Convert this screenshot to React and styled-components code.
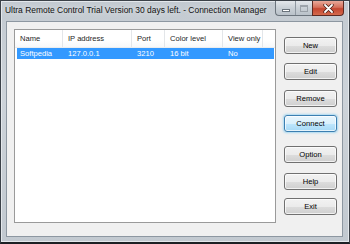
import styled, { createGlobalStyle } from "styled-components";

const GlobalStyle = createGlobalStyle`
  html, body {
    margin: 0;
    padding: 0;
    background: #ffffff;
  }
  * {
    box-sizing: border-box;
  }
`;

const columns = [
  { title: "Name", width: 48 },
  { title: "IP address", width: 69 },
  { title: "Port", width: 33 },
  { title: "Color level", width: 58 },
  { title: "View only", width: 40 },
];

const rows = [["Softpedia", "127.0.0.1", "3210", "16 bit", "No"]];

const buttons = [
  { label: "New", mt: 8 },
  { label: "Edit", mt: 9 },
  { label: "Remove", mt: 10 },
  { label: "Connect", mt: 8, focus: true },
  { label: "Option", mt: 14 },
  { label: "Help", mt: 10 },
  { label: "Exit", mt: 8 },
];

const App = () => {
  return (
    <>
      <GlobalStyle />
      <Window>
        <TitleBar>
          <Title>Ultra Remote Control Trial Version 30 days left. - Connection Manager</Title>
          <Caption>
            <CapGroup>
              <CapBtn>
                <MinIcon />
              </CapBtn>
              <CapBtn $max>
                <MaxIcon />
              </CapBtn>
            </CapGroup>
            <CloseBtn>
              <svg width="11" height="9" viewBox="0 0 11 9">
                <path d="M2 1 L9 8 M9 1 L2 8" stroke="#4a2018" strokeWidth="3.4" strokeLinecap="round" />
                <path d="M2 1 L9 8 M9 1 L2 8" stroke="#ffffff" strokeWidth="1.8" strokeLinecap="round" />
              </svg>
            </CloseBtn>
          </Caption>
        </TitleBar>
        <Client>
          <ListView>
            <Header>
              {columns.map((c) => (
                <HeadCell key={c.title} $w={c.width}>
                  {c.title}
                </HeadCell>
              ))}
              <HeadRest />
            </Header>
            {rows.map((r) => (
              <Row key={r[0]} $selected>
                {r.map((v, i) => (
                  <Cell key={i} $w={columns[i].width} $first={i === 0}>
                    {v}
                  </Cell>
                ))}
              </Row>
            ))}
          </ListView>
          <ButtonColumn>
            {buttons.map((b) => (
              <Button key={b.label} $mt={b.mt} $focus={b.focus}>
                {b.label}
              </Button>
            ))}
          </ButtonColumn>
        </Client>
      </Window>
    </>
  );
};
export default App;

const Window = styled.div`
  width: 350px;
  height: 244px;
  display: flex;
  flex-direction: column;
  border: 1px solid #3b4148;
  border-bottom: 2px solid #1c2024;
  background: linear-gradient(180deg, #c3cad1 0%, #cdd3d9 40%, #c2c9d0 100%);
  font-family: "Liberation Sans", Arial, sans-serif;
  box-shadow: inset 0 0 0 1px #e4e8ec;
`;

const TitleBar = styled.div`
  height: 20px;
  display: flex;
  justify-content: space-between;
  align-items: flex-start;
  padding-left: 4px;
  padding-right: 5px;
`;

const Title = styled.div`
  font-size: 8.45px;
  color: #111;
  line-height: 19px;
  white-space: nowrap;
  text-shadow: 0 0 6px rgba(255, 255, 255, 0.9);
`;

const Caption = styled.div`
  display: flex;
  align-items: flex-start;
`;

const CapGroup = styled.div`
  display: flex;
  height: 15px;
  border: 1px solid #6b747d;
  border-top: none;
  border-right: none;
  border-radius: 0 0 0 4px;
  overflow: hidden;
  background: linear-gradient(180deg, #e3e7eb 0%, #c9d0d6 50%, #b9c1c9 100%);
`;

const CapBtn = styled.div`
  width: ${(p) => (p.$max ? 17 : 19)}px;
  height: 100%;
  display: flex;
  align-items: center;
  justify-content: center;
  border-left: ${(p) => (p.$max ? "1px solid #8f98a1" : "none")};
`;

const MinIcon = styled.div`
  width: 8px;
  height: 3px;
  margin-top: 4px;
  background: #ffffff;
  border: 1px solid #6a737c;
`;

const MaxIcon = styled.div`
  width: 8px;
  height: 7px;
  border: 1px solid #8e969e;
  border-top-width: 2px;
  opacity: 0.8;
`;

const CloseBtn = styled.div`
  width: 32px;
  height: 15px;
  display: flex;
  align-items: center;
  justify-content: center;
  border: 1px solid #5d2a22;
  border-top: none;
  border-radius: 0 0 4px 0;
  background: linear-gradient(180deg, #e9a99a 0%, #d5705b 45%, #c44630 55%, #d46a4d 100%);
`;

const Client = styled.div`
  flex: 1;
  margin: 0 6px 5px 5px;
  display: flex;
  align-items: flex-start;
  padding: 7px 5px 13px 7px;
  background: #f0f0f0;
  border: 1px solid #8d97a1;
`;

const ListView = styled.div`
  flex: 1;
  align-self: stretch;
  background: #ffffff;
  border: 1px solid #9a9a9a;
  margin-right: 8px;
  padding-left: 2px;
`;

const Header = styled.div`
  display: flex;
  height: 18px;
  margin-left: -2px;
  background: linear-gradient(180deg, #ffffff 0%, #ffffff 60%, #f7f8f9 100%);
  border-bottom: 1px solid #ebedef;
`;

const HeadCell = styled.div`
  width: ${(p) => p.$w}px;
  flex-shrink: 0;
  padding-left: 5px;
  font-size: 7.6px;
  line-height: 18px;
  color: #1e1e1e;
  border-right: 1px solid #e3e6e9;
  white-space: nowrap;
`;

const HeadRest = styled.div`
  flex: 1;
`;

const Row = styled.div`
  display: flex;
  height: 11px;
  margin-right: 1px;
  background: ${(p) => (p.$selected ? "#3399ff" : "transparent")};
  color: ${(p) => (p.$selected ? "#ffffff" : "#000000")};
`;

const Cell = styled.div`
  width: ${(p) => (p.$first ? p.$w - 2 : p.$w)}px;
  flex-shrink: 0;
  padding-left: ${(p) => (p.$first ? 3 : 5)}px;
  font-size: 7.6px;
  line-height: 11px;
  white-space: nowrap;
  overflow: hidden;
`;

const ButtonColumn = styled.div`
  width: 53px;
  display: flex;
  flex-direction: column;
`;

const Button = styled.div`
  height: 17px;
  margin-top: ${(p) => p.$mt}px;
  display: flex;
  align-items: center;
  justify-content: center;
  font-size: 7.6px;
  color: #000;
  border-radius: 3px;
  border: 1px solid ${(p) => (p.$focus ? "#3c7fb1" : "#707070")};
  background: ${(p) =>
    p.$focus
      ? "linear-gradient(180deg, #eaf6fd 0%, #d9f0fc 50%, #bee6fd 51%, #a7d9f5 100%)"
      : "linear-gradient(180deg, #f2f2f2 0%, #ebebeb 50%, #dddddd 51%, #cfcfcf 100%)"};
  box-shadow: inset 0 0 0 1px rgba(255, 255, 255, 0.7)
    ${(p) => (p.$focus ? ", 0 0 2px 1px rgba(120, 200, 240, 0.6)" : "")};
`;
